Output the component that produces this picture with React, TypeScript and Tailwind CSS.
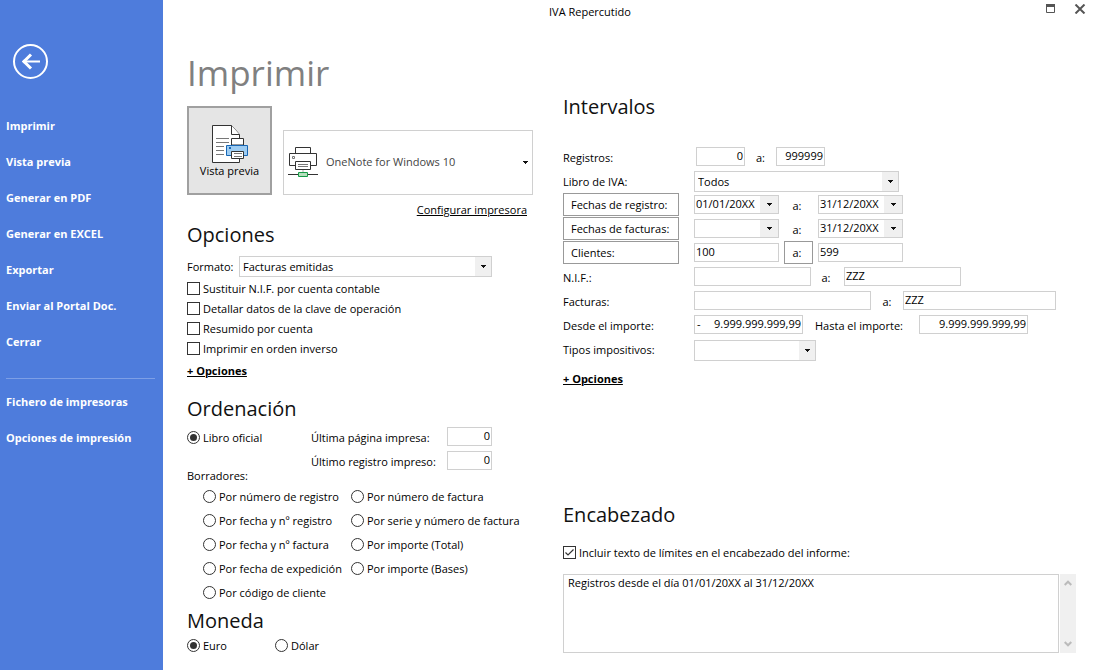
import React, { useId, useState } from "react";

const fieldClass =
  "block h-[19px] border border-[#d0d0d0] bg-white px-[3px] pb-[2px] leading-4 outline-none focus:border-[#4e7cdc]";

function Caret() {
  return (
    <svg width="5" height="3" viewBox="0 0 5 3" className="block" aria-hidden="true">
      <path d="M0 0H5V1H4V2H3V3H2V2H1V1H0Z" fill="#111" />
    </svg>
  );
}

function Combo({ label, options, width }: { label: string; options: string[]; width: string }) {
  return (
    <div className={`relative h-[21px] ${width}`}>
      <select
        aria-label={label}
        className="block h-full w-full appearance-none border border-[#d0d0d0] bg-white pr-5 pl-[3px] leading-4 outline-none"
      >
        {options.map((o) => (
          <option key={o}>{o}</option>
        ))}
      </select>
      <span className="pointer-events-none absolute inset-y-px right-px flex w-4 items-center justify-center bg-[#f0f0f0]">
        <Caret />
      </span>
    </div>
  );
}

function DateField({ label, value }: { label: string; value: string }) {
  return (
    <div className="flex h-[19px] w-[85px] border border-[#d0d0d0] bg-white">
      <input aria-label={label} defaultValue={value} className="min-w-0 flex-1 pb-[2px] pl-px leading-4 outline-none" />
      <button type="button" aria-label={`Abrir calendario: ${label}`} className="flex w-[18px] items-center justify-center bg-[#f0f0f0]">
        <Caret />
      </button>
    </div>
  );
}

function Check({ label, checked = false }: { label: string; checked?: boolean }) {
  return (
    <label className="flex h-5 items-center gap-[3px]">
      <span className="relative mb-[2px] block size-[13px]">
        <input
          type="checkbox"
          defaultChecked={checked}
          className="peer block size-[13px] appearance-none border border-[#333] bg-white"
        />
        <svg
          viewBox="0 0 13 13"
          className="pointer-events-none absolute inset-0 hidden size-[13px] peer-checked:block"
          aria-hidden="true"
        >
          <path d="M2.5 6.5L5 9L10.5 3.5" fill="none" stroke="#333" strokeWidth="1.2" />
        </svg>
      </span>
      <span>{label}</span>
    </label>
  );
}

function Radio({ label, name, checked = false }: { label: string; name: string; checked?: boolean }) {
  return (
    <label className="flex h-6 items-center gap-[3px] whitespace-nowrap">
      <span className="relative mb-[2px] block size-[13px]">
        <input
          type="radio"
          name={name}
          defaultChecked={checked}
          className="peer block size-[13px] appearance-none rounded-full border border-[#333] bg-white"
        />
        <span className="pointer-events-none absolute inset-[3px] hidden rounded-full bg-[#333] peer-checked:block" />
      </span>
      <span>{label}</span>
    </label>
  );
}

function Heading({ children }: { children: React.ReactNode }) {
  return <h2 className="text-[20px] leading-7 text-[#111]">{children}</h2>;
}

function To({ width }: { width: string }) {
  return <span className={`pt-[3px] pr-[3px] text-center ${width}`}>a:</span>;
}

function Row({ label, button = false, children }: { label: string; button?: boolean; children: React.ReactNode }) {
  return (
    <div className="flex h-[23px] items-center">
      {button ? (
        <button type="button" className="mr-[15px] h-full w-[116px] border border-[#999] pl-[7px] text-left">
          {label}
        </button>
      ) : (
        <span className="w-[131px] pt-[3px]">{label}</span>
      )}
      {children}
    </div>
  );
}

function NumberRow({ label }: { label: string }) {
  const id = useId();
  return (
    <div className="flex h-6 items-center">
      <label htmlFor={id} className="w-[136px] whitespace-nowrap pt-[2px]">
        {label}
      </label>
      <input id={id} defaultValue="0" className={`${fieldClass} mb-[2px] w-[45px] pr-px text-right`} />
    </div>
  );
}

function DocumentPrinterIcon() {
  return (
    <svg width="39" height="39" viewBox="-2 0 39 39" fill="none" aria-hidden="true">
      <path d="M.5 1.5H19.5L27.5 10.5V38.5H.5Z" fill="#fff" stroke="#333" />
      <path d="M19.5 1.5V10.5H27.5" fill="#fff" stroke="#333" />
      <path d="M4 14.5H17M4 18.5H17M4 22.5H12M4 26.5H12M4 30.5H12" stroke="#777" />
      <path d="M19.5 14.5H31.5V21H19.5Z" fill="#fff" stroke="#333" />
      <path d="M14.5 21.5H35.5V31.5H14.5Z" fill="#9dccf2" stroke="#1766b5" />
      <path d="M17 23H19V25H17Z" fill="#1766b5" />
      <path d="M19.5 27.5H31.5V34.5H19.5Z" fill="#fff" stroke="#333" />
      <path d="M22 29.5H30M22 32.5H30" stroke="#777" />
    </svg>
  );
}

function NetworkPrinterIcon() {
  return (
    <svg width="30" height="31" viewBox="0 0 30 31" fill="none" aria-hidden="true">
      <path d="M7.5 6.5V.5H22.5V6.5" fill="#fff" stroke="#333" />
      <path d="M7 18.5H1.5V6.5H28.5V18.5H23" fill="#fff" stroke="#333" />
      <path d="M4.5 9.5H6.5V11.5H4.5Z" stroke="#777" />
      <path d="M7.5 14.5H22.5V22.5H7.5Z" fill="#fff" stroke="#333" />
      <path d="M10 17.5H20M10 19.5H20" stroke="#777" />
      <path d="M15 23V25" stroke="#aaa" />
      <path d="M0 27.5H10M20 27.5H30" stroke="#333" />
      <path d="M10.5 25.5H19.5V29.5H10.5Z" fill="#b5dfbd" stroke="#159a46" />
    </svg>
  );
}

const menu = [
  "Imprimir",
  "Vista previa",
  "Generar en PDF",
  "Generar en EXCEL",
  "Exportar",
  "Enviar al Portal Doc.",
  "Cerrar",
];

function Sidebar() {
  return (
    <nav className="w-[163px] shrink-0 bg-[#4e7cdc] pt-11 font-bold text-white">
      <button type="button" aria-label="Volver" className="ml-3 block">
        <svg width="37" height="37" viewBox="0 0 37 37" fill="none" stroke="#fff" aria-hidden="true">
          <circle cx="18.5" cy="17.5" r="16.5" strokeWidth="2" />
          <path d="M28 17.5H12" strokeWidth="2" />
          <path d="M19 10.5L12 17.5L19 24.5" strokeWidth="3" />
          <path d="M10 17.5L12.5 15V20Z" fill="#fff" stroke="none" />
        </svg>
      </button>
      <ul className="mt-[27px]">
        {menu.map((m) => (
          <li key={m}>
            <a href="#" className="block h-9 pl-[6px] leading-9">
              {m}
            </a>
          </li>
        ))}
      </ul>
      <hr className="mr-2 ml-[6px] mt-[18px] mb-[5px] border-[#7d9fe6]" />
      {["Fichero de impresoras", "Opciones de impresión"].map((m) => (
        <a key={m} href="#" className="block h-9 pl-[6px] leading-9">
          {m}
        </a>
      ))}
    </nav>
  );
}

function PrintColumn() {
  return (
    <div className="w-[346px] shrink-0">
      <h1 className="mt-6 text-[35px] leading-[50px] text-[#808080]">Imprimir</h1>
      <div className="mt-2 flex items-end gap-[11px]">
        <button
          type="button"
          className="flex h-[89px] w-[85px] flex-col items-center border-2 border-[#a0a0a0] bg-[#e5e5e5] pt-4"
        >
          <DocumentPrinterIcon />
          <span className="leading-4">Vista previa</span>
        </button>
        <button
          type="button"
          className="flex h-[65px] flex-1 items-center border border-[#d0d0d0] pr-1 pl-1 text-[#444]"
        >
          <NetworkPrinterIcon />
          <span className="ml-2 flex-1 pb-[2px] text-left">OneNote for Windows 10</span>
          <Caret />
        </button>
      </div>
      <a href="#" className="mt-[7px] mr-[6px] block text-right leading-4 underline">
        Configurar impresora
      </a>

      <div className="mt-[3px]">
        <Heading>Opciones</Heading>
      </div>
      <div className="mt-[7px] flex items-center">
        <span className="w-[52px]">Formato:</span>
        <Combo label="Formato" options={["Facturas emitidas"]} width="w-[253px]" />
      </div>
      <div className="mt-[2px]">
        <Check label="Sustituir N.I.F. por cuenta contable" />
        <Check label="Detallar datos de la clave de operación" />
        <Check label="Resumido por cuenta" />
        <Check label="Imprimir en orden inverso" />
      </div>
      <a href="#" className="mt-1 block leading-4 font-bold underline">
        + Opciones
      </a>

      <div className="mt-4">
        <Heading>Ordenación</Heading>
      </div>
      <div className="mt-[2px] flex">
        <div className="w-[124px] pt-px">
          <Radio name="orden" label="Libro oficial" checked />
        </div>
        <div>
          <NumberRow label="Última página impresa:" />
          <NumberRow label="Último registro impreso:" />
        </div>
      </div>
      <p className="mt-[-5px] leading-4">Borradores:</p>
      <div className="mt-px flex pl-4">
        <div className="w-[148px]">
          <Radio name="orden" label="Por número de registro" />
          <Radio name="orden" label="Por fecha y nº registro" />
          <Radio name="orden" label="Por fecha y nº factura" />
          <Radio name="orden" label="Por fecha de expedición" />
          <Radio name="orden" label="Por código de cliente" />
        </div>
        <div>
          <Radio name="orden" label="Por número de factura" />
          <Radio name="orden" label="Por serie y número de factura" />
          <Radio name="orden" label="Por importe (Total)" />
          <Radio name="orden" label="Por importe (Bases)" />
        </div>
      </div>

      <div className="mt-[2px]">
        <Heading>Moneda</Heading>
      </div>
      <div className="mt-[-1px] flex">
        <div className="w-[88px]">
          <Radio name="moneda" label="Euro" checked />
        </div>
        <Radio name="moneda" label="Dólar" />
      </div>
    </div>
  );
}

function RangeColumn() {
  const [text, setText] = useState("Registros desde el día 01/01/20XX al 31/12/20XX");
  return (
    <div className="min-w-0 flex-1 pt-[69px]">
      <Heading>Intervalos</Heading>
      <div className="mt-6 flex flex-col gap-px">
        <Row label="Registros:">
          <input aria-label="Registro inicial" defaultValue="0" className={`${fieldClass} ml-[2px] w-[49px] pr-px text-right`} />
          <span className="w-[31px] pt-[3px] text-center">a:</span>
          <input aria-label="Registro final" defaultValue="999999" className={`${fieldClass} w-[49px] pr-px text-right`} />
        </Row>
        <Row label="Libro de IVA:">
          <div className="pt-[2px]">
            <Combo label="Libro de IVA" options={["Todos"]} width="w-[205px]" />
          </div>
        </Row>
        <Row label="Fechas de registro:" button>
          <DateField label="Fecha de registro inicial" value="01/01/20XX" />
          <To width="w-[39px]" />
          <DateField label="Fecha de registro final" value="31/12/20XX" />
        </Row>
        <Row label="Fechas de facturas:" button>
          <DateField label="Fecha de factura inicial" value="" />
          <To width="w-[39px]" />
          <DateField label="Fecha de factura final" value="31/12/20XX" />
        </Row>
        <Row label="Clientes:" button>
          <input aria-label="Cliente inicial" defaultValue="100" className={`${fieldClass} w-[85px] pl-px`} />
          <button type="button" className="mx-[5px] h-full w-[29px] border border-[#999] pr-[3px] text-center">
            a:
          </button>
          <input aria-label="Cliente final" defaultValue="599" className={`${fieldClass} w-[85px] pl-px`} />
        </Row>
        <Row label="N.I.F.:">
          <input aria-label="N.I.F. inicial" className={`${fieldClass} w-[117px]`} />
          <To width="w-[33px]" />
          <input aria-label="N.I.F. final" defaultValue="ZZZ" className={`${fieldClass} w-[117px] pl-px`} />
        </Row>
        <Row label="Facturas:">
          <input aria-label="Factura inicial" className={`${fieldClass} w-[177px]`} />
          <span className="w-[32px] pt-[3px] text-center">a:</span>
          <input aria-label="Factura final" defaultValue="ZZZ" className={`${fieldClass} w-[153px] pl-px`} />
        </Row>
        <Row label="Desde el importe:">
          <div className="flex h-[19px] w-[109px] border border-[#d0d0d0]">
            <span className="pl-[2px] leading-4">-</span>
            <input aria-label="Desde el importe" defaultValue="9.999.999.999,99" className="min-w-0 flex-1 pr-px pb-[2px] text-right leading-4 outline-none" />
          </div>
          <span className="w-[116px] pt-[3px] pl-3">Hasta el importe:</span>
          <input aria-label="Hasta el importe" defaultValue="9.999.999.999,99" className={`${fieldClass} w-[109px] pr-px text-right`} />
        </Row>
        <Row label="Tipos impositivos:">
          <div className="pt-[3px]">
            <Combo label="Tipos impositivos" options={[""]} width="w-[122px]" />
          </div>
        </Row>
      </div>
      <a href="#" className="mt-[11px] block leading-4 font-bold underline">
        + Opciones
      </a>

      <div className="mt-[114px]">
        <Heading>Encabezado</Heading>
      </div>
      <div className="mt-[14px]">
        <Check label="Incluir texto de límites en el encabezado del informe:" checked />
      </div>
      <div className="mt-[11px] flex h-[79px] gap-px">
        <textarea
          aria-label="Texto del encabezado"
          value={text}
          onChange={(e) => setText(e.target.value)}
          className="block min-w-0 flex-1 resize-none overflow-hidden border border-[#d0d0d0] px-1 leading-4 outline-none"
        />
        <div className="flex w-4 flex-col items-center justify-between bg-[#f0f0f0] py-[6px]">
          <button type="button" aria-label="Subir">
            <svg width="8" height="6" viewBox="0 0 8 6" className="block" fill="none" stroke="#bbb" strokeWidth="2">
              <path d="M.7 5L4 1.7L7.3 5" />
            </svg>
          </button>
          <button type="button" aria-label="Bajar">
            <svg width="8" height="6" viewBox="0 0 8 6" className="block" fill="none" stroke="#bbb" strokeWidth="2">
              <path d="M.7 1L4 4.3L7.3 1" />
            </svg>
          </button>
        </div>
      </div>
    </div>
  );
}

export default function App() {
  return (
    <div className="flex min-h-screen bg-white font-['Open_Sans','Noto_Sans',sans-serif] text-[11px] leading-4 text-black">
      <Sidebar />
      <main className="flex min-w-0 flex-1 flex-col">
        <header className="flex h-6 items-start pt-1 pr-2 pl-[386px]">
          <span className="flex-1">IVA Repercutido</span>
          <button type="button" aria-label="Maximizar" className="mr-[19px]">
            <svg width="9" height="9" viewBox="0 0 9 9" className="block">
              <path d="M.5 .5H8.5V8.5H.5Z" fill="none" stroke="#555" />
              <path d="M0 0H9V3H0Z" fill="#555" />
            </svg>
          </button>
          <button type="button" aria-label="Cerrar ventana">
            <svg width="12" height="10" viewBox="0 0 12 10" className="block" stroke="#555" strokeWidth="2">
              <path d="M1.5 .5L10.5 9.5M10.5 .5L1.5 9.5" />
            </svg>
          </button>
        </header>
        <div className="flex gap-[30px] pr-[18px] pl-6">
          <PrintColumn />
          <RangeColumn />
        </div>
      </main>
    </div>
  );
}
